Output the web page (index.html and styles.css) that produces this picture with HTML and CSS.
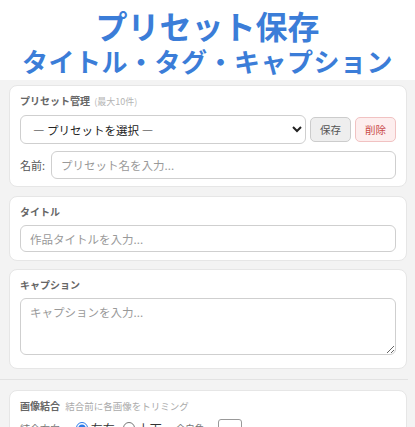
FILE: index.html
```html
<!DOCTYPE html>
<html lang="ja">
<head>
<meta charset="utf-8">
<title>プリセット保存</title>
<link rel="stylesheet" href="styles.css">
</head>
<body>
<header class="hero">
  <div class="hero-line1">プリセット保存</div>
  <div class="hero-line2">タイトル・タグ・キャプション</div>
</header>
<main class="main">
  <section class="card card-preset">
    <div class="label">プリセット管理 <span class="hint">(最大10件)</span></div>
    <div class="preset-row">
      <select class="select">
        <option>— プリセットを選択 —</option>
      </select>
      <button class="btn btn-save">保存</button>
      <button class="btn btn-del">削除</button>
    </div>
    <div class="name-row">
      <span class="name-label">名前:</span>
      <input class="input" type="text" placeholder="プリセット名を入力...">
    </div>
  </section>
  <section class="card card-title">
    <div class="label">タイトル</div>
    <input class="input" type="text" placeholder="作品タイトルを入力...">
  </section>
  <section class="card card-caption">
    <div class="label">キャプション</div>
    <textarea class="textarea" placeholder="キャプションを入力..."></textarea>
  </section>
  <hr class="sep">
  <section class="card card-merge">
    <div class="label label-merge">画像結合 <span class="hint hint-merge">結合前に各画像をトリミング</span></div>
    <div class="merge-row">
      <span class="merge-label">結合方向:</span>
      <label class="radio"><input type="radio" name="dir" checked>左右</label>
      <label class="radio"><input type="radio" name="dir">上下</label>
      <span class="pad-label">余白色</span>
      <span class="swatch"></span>
    </div>
  </section>
</main>
</body>
</html>
```
FILE: styles.css
```css
* { box-sizing: border-box; }
html, body {
  margin: 0;
  padding: 0;
}
body {
  background: #f3f3f3;
  font-family: "Noto Sans CJK JP", "Noto Sans", sans-serif;
  color: #333;
  overflow: hidden;
}
.hero {
  background: #ffffff;
  height: 80px;
  padding-top: 8px;
  text-align: center;
  color: #3b7dd8;
  font-weight: 700;
}
.hero-line1 {
  font-size: 32px;
  line-height: 35px;
}
.hero-line2 {
  font-size: 26px;
  line-height: 35px;
  letter-spacing: 0.5px;
}
.main {
  padding: 5px 8px 0 9px;
  display: flex;
  flex-direction: column;
}
.card {
  background: #fff;
  border: 1px solid #e6e6e6;
  border-radius: 8px;
  padding: 9px 10px 7px 10px;
  margin-bottom: 8px;
}
.card-preset { margin-bottom: 9px; }
.card-title { padding-bottom: 8px; }
.card-caption { padding-bottom: 13px; margin-bottom: 0; }
.label {
  font-size: 10px;
  line-height: 12px;
  font-weight: 700;
  color: #666;
  margin-bottom: 7px;
}
.label-merge {
  margin-bottom: 4px;
}
.hint {
  font-size: 9px;
  font-weight: 400;
  color: #b5b5b5;
  margin-left: 2px;
}
.hint-merge {
  font-size: 9.5px;
  color: #aaa;
  margin-left: 3px;
}
.preset-row {
  display: flex;
  align-items: center;
  gap: 4px;
  margin-bottom: 7px;
}
.select {
  flex: 1;
  height: 29px;
  border: 1px solid #cfcfcf;
  border-radius: 6px;
  background: #fff;
  font-family: inherit;
  font-size: 11.5px;
  color: #222;
  padding: 0 6px 0 8px;
}
.btn {
  height: 25px;
  padding: 0 9px;
  border-radius: 5px;
  font-family: inherit;
  font-size: 10.5px;
  cursor: pointer;
}
.btn-save {
  background: #eeeeee;
  border: 1px solid #cccccc;
  color: #555;
}
.btn-del {
  background: #fdeeee;
  border: 1px solid #f1c2c2;
  color: #c94a4a;
}
.name-row {
  display: flex;
  align-items: center;
  gap: 6px;
}
.name-label {
  font-size: 11px;
  color: #555;
}
.input {
  display: block;
  width: 100%;
  flex: 1;
  height: 28px;
  border: 1px solid #cfcfcf;
  border-radius: 6px;
  background: #fff;
  font-family: inherit;
  font-size: 11.5px;
  padding: 0 9px;
  color: #333;
}
.card-title .input { height: 27px; }
.input::placeholder, .textarea::placeholder {
  color: #999;
}
.textarea {
  display: block;
  width: 100%;
  height: 57px;
  border: 1px solid #cfcfcf;
  border-radius: 6px;
  font-family: inherit;
  font-size: 11.5px;
  padding: 5px 9px;
  color: #333;
  resize: vertical;
}
.sep {
  border: 0;
  border-top: 1px solid #e2e2e2;
  margin: 10px -1px 10px -9px;
  height: 0;
}
.card-merge {
  padding-top: 9px;
}
.merge-row {
  display: flex;
  align-items: center;
  color: #555;
  height: 24px;
}
.merge-label {
  font-size: 10px;
  color: #777;
  margin-right: 13px;
}
.radio {
  display: flex;
  align-items: center;
  margin-right: 8px;
  font-size: 12px;
  color: #333;
}
.radio input {
  width: 12px;
  height: 12px;
  margin: 0 3px 0 0;
  accent-color: #2b7be9;
}
.pad-label {
  font-size: 9.5px;
  margin-left: 6px;
  margin-right: 14px;
  color: #777;
}
.swatch {
  width: 24px;
  height: 20px;
  border: 1px solid #999;
  border-radius: 3px;
  background: #fff;
  align-self: flex-start;
  margin-top: 3px;
}
```
